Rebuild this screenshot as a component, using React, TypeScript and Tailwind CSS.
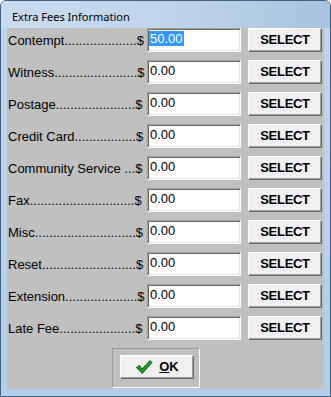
import React from "react";

const rows: { name: string; dots: number; value: string; selected?: boolean }[] = [
  { name: "Contempt", dots: 20, value: "50.00", selected: true },
  { name: "Witness", dots: 23, value: "0.00" },
  { name: "Postage", dots: 22, value: "0.00" },
  { name: "Credit Card", dots: 17, value: "0.00" },
  { name: "Community Service ", dots: 3, value: "0.00" },
  { name: "Fax", dots: 29, value: "0.00" },
  { name: "Misc", dots: 28, value: "0.00" },
  { name: "Reset", dots: 26, value: "0.00" },
  { name: "Extension", dots: 20, value: "0.00" },
  { name: "Late Fee", dots: 21, value: "0.00" },
];

const DOTS = "..................................................";

function Row({ name, dots, value, selected }: { name: string; dots: number; value: string; selected?: boolean }) {
  return (
    <div className="flex h-[24px] items-center">
      <div className="w-[139px] pt-[2px] text-[13px] leading-[16px] text-black whitespace-pre">
        {name}
        {DOTS.slice(0, dots)}$
      </div>
      <div className="w-[94px] h-[24px] bg-white border border-t-[#a0a0a0] border-l-[#a0a0a0] border-b-white border-r-white shadow-[inset_1px_1px_0_#696969,inset_-1px_-1px_0_#e3e3e3] flex items-start pt-[2px] pl-[1px]">
        {selected ? (
          <span className="bg-[#3399ff] text-white text-[13px] leading-[15px] px-[1px]">{value}</span>
        ) : (
          <span className="text-black text-[13px] leading-[15px] px-[1px]">{value}</span>
        )}
      </div>
      <div className="ml-[7px] w-[74px] h-[24px] bg-[#f0f0f0] border border-t-white border-l-white border-b-[#696969] border-r-[#696969] shadow-[inset_-1px_-1px_0_#a0a0a0] flex items-center justify-center">
        <span className="text-[13px] font-bold leading-[16px] tracking-[-0.3px] text-black">SELECT</span>
      </div>
    </div>
  );
}

export default function App() {
  return (
    <div
      className="w-[331px] h-[397px] flex flex-col border border-[#3f6182] rounded-t-[6px] bg-gradient-to-b from-[#c3d7ec] to-[#b4cde8] overflow-hidden"
      style={{ fontFamily: '"Liberation Sans", Arial, sans-serif' }}
    >
      <div className="h-[27px] pl-[11px] pt-[9px] bg-gradient-to-r from-[#c9dbee] via-[#c0d5eb] to-[#a8c3e0]">
        <span className="block text-[11px] leading-[14px] text-black" style={{ fontFamily: '"Noto Sans", "Open Sans", sans-serif' }}>
          Extra Fees Information
        </span>
      </div>
      <div className="flex-1 flex px-[6px] pb-[7px]">
        <div className="flex-1 bg-[#c0c0c0] flex flex-col pl-[1px]">
          <div className="flex flex-col gap-[8px]">
            {rows.map((r) => (
              <Row key={r.name} {...r} />
            ))}
          </div>
          <div className="mt-[8px] ml-[104px] w-[88px] h-[40px] border border-t-[#9a9a9a] border-l-[#9a9a9a] border-b-white border-r-white">
            <div className="mt-[6px] ml-[7px] w-[74px] h-[24px] bg-[#f0f0f0] border border-t-white border-l-white border-b-[#696969] border-r-[#696969] shadow-[inset_-1px_-1px_0_#a0a0a0] flex items-center justify-center gap-[6px]">
              <svg width="18" height="16" viewBox="0 0 18 16">
                <path d="M1.5 8.5 L4.5 6.5 L7 10 L15 1.5 L17 3.5 L7.2 14.5 Z" fill="#1f9a2a" stroke="#0d5e17" strokeWidth="1" strokeLinejoin="round" />
              </svg>
              <span className="text-[13px] font-bold leading-[16px] text-black">
                <span className="underline">O</span>K
              </span>
            </div>
          </div>
        </div>
      </div>
    </div>
  );
}
